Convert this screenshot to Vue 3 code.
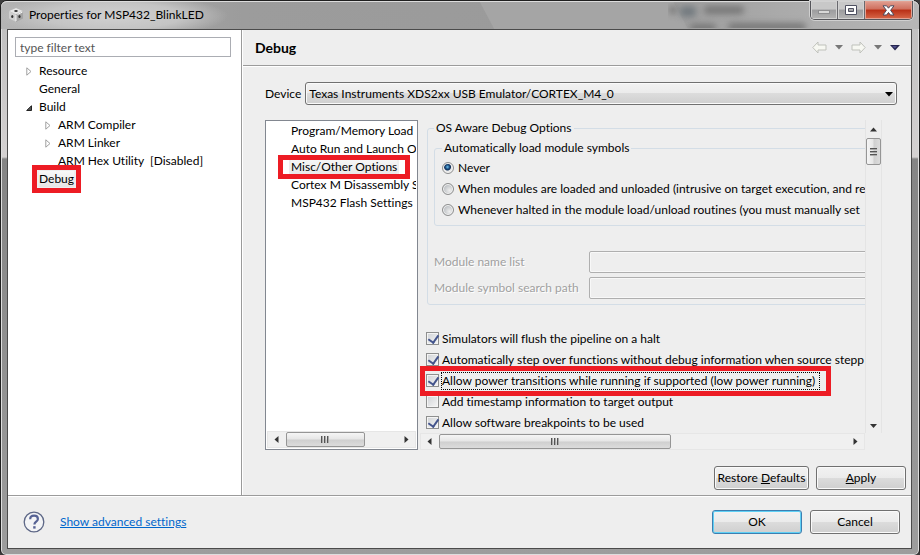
<script setup>
import { ref } from 'vue'

const filter = ref('')
const device = ref('xds2xx')
const loadMode = ref('never')

const tree = [
  { label: 'Resource', level: 0, arrow: 'closed' },
  { label: 'General', level: 0 },
  { label: 'Build', level: 0, arrow: 'open' },
  { label: 'ARM Compiler', level: 1, arrow: 'closed' },
  { label: 'ARM Linker', level: 1, arrow: 'closed' },
  { label: 'ARM Hex Utility  [Disabled]', level: 1 },
  { label: 'Debug', level: 0, marked: true },
]

const categories = [
  { label: 'Program/Memory Load' },
  { label: 'Auto Run and Launch O' },
  { label: 'Misc/Other Options', marked: true },
  { label: 'Cortex M Disassembly S' },
  { label: 'MSP432 Flash Settings' },
]

const modes = [
  { value: 'never', label: 'Never' },
  { value: 'modules', label: 'When modules are loaded and unloaded (intrusive on target execution, and re' },
  { value: 'halted', label: 'Whenever halted in the module load/unload routines (you must manually set' },
]

const options = ref([
  { label: 'Simulators will flush the pipeline on a halt', on: true },
  { label: 'Automatically step over functions without debug information when source stepp', on: true },
  { label: 'Allow power transitions while running if supported (low power running)', on: true, marked: true },
  { label: 'Add timestamp information to target output', on: false },
  { label: 'Allow software breakpoints to be used', on: true },
])
</script>

<template>
  <div class="window">
    <header class="titlebar">
      <svg class="app-icon" viewBox="0 0 16 16" aria-hidden="true">
        <path d="M8 1 15 4v7.500L8 15 1 11.500V4z" fill="#a4a4a4" />
        <path d="M8 1 15 4 8 7.500 1 4z" fill="#e6e6e6" />
        <path d="M1 4 8 7.500V15l-7-3.500z" fill="#d0d0d0" />
        <ellipse cx="8" cy="4" rx="1.800" ry="1" fill="#333" />
        <ellipse cx="4.300" cy="9.500" rx="1.100" ry="1.600" fill="#333" />
        <ellipse cx="11.500" cy="9.500" rx="1.100" ry="1.600" fill="#333" />
        <path d="M8 8v6M9.500 7.500l5-2.500" stroke="#f4f4f4" />
      </svg>
      <h1 class="title">Properties for MSP432_BlinkLED</h1>
      <div class="ghost" aria-hidden="true"><i></i><i></i><i></i><i></i><i></i></div>
      <div class="controls">
        <button class="ctl" aria-label="Minimize">
          <svg width="12" height="12" viewBox="0 0 12 12"><rect x=".5" y="6.500" width="11" height="3" fill="#d8d8d8" stroke="#8e8e90" /></svg>
        </button>
        <button class="ctl" aria-label="Maximize">
          <svg width="12" height="11" viewBox="0 0 12 11"><path d="M.5.5h11v9H.5zM3.500 3.500v3h5v-3z" fill="#fff" fill-rule="evenodd" stroke="#4e5060" /></svg>
        </button>
        <button class="ctl close" aria-label="Close">
          <svg width="13" height="11" viewBox="0 0 13 11"><path d="M1 .8h3.600l1.900 2.400L8.400.8H12L8.600 5.300 12 10H8.400L6.500 7.500 4.600 10H1l3.400-4.700z" fill="#fff" stroke="#4c4a5c" /></svg>
        </button>
      </div>
    </header>

    <div class="client">
      <main class="panes">
        <nav class="sidebar" aria-label="Property pages">
          <input v-model="filter" class="filter" type="text" placeholder="type filter text" aria-label="Filter" />
          <ul class="tree">
            <li v-for="n in tree" :key="n.label" :class="['node', 'level-' + n.level]">
              <span class="arrow">
                <svg v-if="n.arrow === 'closed'" width="6" height="9" viewBox="0 0 6 9"><path d="M.8.8v7.400l4.200-3.700z" fill="#fff" stroke="#a0a0a0" /></svg>
                <svg v-else-if="n.arrow === 'open'" width="6" height="6" viewBox="0 0 6 6"><path d="M5.500.7v4.800H.7z" fill="#555" stroke="#222" /></svg>
              </span>
              <span :class="['text', { marked: n.marked, 'tree-mark': n.marked }]">{{ n.label }}</span>
            </li>
          </ul>
        </nav>

        <section class="page">
          <div class="page-head">
            <h2>Debug</h2>
            <div class="history">
              <button aria-label="Back">
                <svg width="15" height="13" viewBox="0 0 15 13"><path d="M.8 6.500 6 1v3h8v5H6v3z" fill="#f7f8f2" stroke="#bfc1bb" /></svg>
              </button>
              <button aria-label="Back menu"><svg width="8" height="5" viewBox="0 0 8 5"><path d="M0 0h8L4 4.500z" fill="#777" /></svg></button>
              <button aria-label="Forward">
                <svg width="15" height="13" viewBox="0 0 15 13"><path d="M14.200 6.500 9 1v3H1v5h8v3z" fill="#f7f8f2" stroke="#bfc1bb" /></svg>
              </button>
              <button aria-label="Forward menu"><svg width="8" height="5" viewBox="0 0 8 5"><path d="M0 0h8L4 4.500z" fill="#777" /></svg></button>
              <button aria-label="View menu"><svg width="10" height="6" viewBox="0 0 10 6"><path d="M0 0h10L5 5.500z" fill="#25254f" /><path d="M2 1h5L5 3.500z" fill="#50508c" /></svg></button>
            </div>
          </div>

          <div class="page-body">
            <div class="device">
              <label for="device">Device</label>
              <div class="combo">
                <select id="device" v-model="device">
                  <option value="xds2xx">Texas Instruments XDS2xx USB Emulator/CORTEX_M4_0</option>
                </select>
                <svg class="combo-arrow" width="8" height="5" viewBox="0 0 8 5" aria-hidden="true"><path d="M0 0h8L4 4.500z" fill="#000" /></svg>
              </div>
            </div>

            <div class="split">
              <div class="list">
                <ul>
                  <li v-for="c in categories" :key="c.label"><span :class="['text', { marked: c.marked, 'list-mark': c.marked }]">{{ c.label }}</span></li>
                </ul>
                <div class="hbar" aria-hidden="true">
                  <svg width="5" height="8" viewBox="0 0 5 8"><path d="M4.500 0v7L.5 3.500z" fill="#333" /></svg>
                  <div class="track"><div class="thumb small"><i></i><i></i><i></i></div></div>
                  <svg width="5" height="8" viewBox="0 0 5 8"><path d="M.5 0v7l4-3.500z" fill="#333" /></svg>
                </div>
              </div>

              <div class="scroller">
                <div class="viewport">
                  <div class="content">
                    <fieldset class="outer">
                      <legend>OS Aware Debug Options</legend>
                      <fieldset class="inner">
                        <legend>Automatically load module symbols</legend>
                        <label v-for="m in modes" :key="m.value" class="choice">
                          <input v-model="loadMode" type="radio" name="mode" :value="m.value" />
                          <span>{{ m.label }}</span>
                        </label>
                      </fieldset>
                      <div class="modules">
                        <label for="mod-list">Module name list</label>
                        <input id="mod-list" type="text" disabled />
                        <label for="mod-path">Module symbol search path</label>
                        <input id="mod-path" type="text" disabled />
                      </div>
                    </fieldset>
                    <div class="checks">
                      <div v-for="o in options" :key="o.label" class="check-row">
                        <label :class="['check', { marked: o.marked, 'check-mark': o.marked }]">
                          <input v-model="o.on" type="checkbox" />
                          <span :class="{ focus: o.marked }">{{ o.label }}</span>
                        </label>
                      </div>
                    </div>
                  </div>
                </div>
                <div class="vbar" aria-hidden="true">
                  <svg width="8" height="5" viewBox="0 0 8 5"><path d="M0 4.500h7L3.500.5z" fill="#333" /></svg>
                  <div class="thumb-v"><i></i><i></i><i></i></div>
                  <svg class="down" width="8" height="5" viewBox="0 0 8 5"><path d="M0 0h7L3.500 4z" fill="#333" /></svg>
                </div>
                <div class="hbar" aria-hidden="true">
                  <svg width="5" height="8" viewBox="0 0 5 8"><path d="M4.500 0v7L.5 3.500z" fill="#333" /></svg>
                  <div class="track"><div class="thumb"><i></i><i></i><i></i></div></div>
                  <svg width="5" height="8" viewBox="0 0 5 8"><path d="M.5 0v7l4-3.500z" fill="#333" /></svg>
                </div>
              </div>
            </div>
          </div>

          <div class="page-actions">
            <button class="btn restore">Restore <u>D</u>efaults</button>
            <button class="btn"><u>A</u>pply</button>
          </div>
        </section>
      </main>

      <footer class="footer">
        <button class="help" aria-label="Help">
          <svg width="22" height="22" viewBox="0 0 22 22">
            <circle cx="11" cy="11" r="9.800" fill="#f3f4f6" stroke="#5d6786" stroke-width="1.300" />
            <path d="M7.200 8.200c0-2.300 1.700-3.500 3.900-3.500s3.800 1.200 3.800 3.200c0 2.700-3.500 2.800-3.500 5.500" fill="none" stroke="#566294" stroke-width="2.200" />
            <rect x="10.200" y="15.200" width="2.400" height="2.400" fill="#566294" />
          </svg>
        </button>
        <a href="#advanced">Show advanced settings</a>
        <div class="footer-actions">
          <button class="btn primary">OK</button>
          <button class="btn">Cancel</button>
        </div>
      </footer>
    </div>
  </div>
</template>

<style>
body {
  background: #3c3c3c;
}
</style>

<style scoped>
* {
  box-sizing: border-box;
}

.window {
  display: flex;
  flex-direction: column;
  min-height: 100vh;
  padding: 0 7px 6px 6px;
  border: 1px solid #1f1f1f;
  border-radius: 7px 7px 6px 6px;
  box-shadow: inset 0 0 0 1px #dedede;
  background: linear-gradient(180deg, #bdbdbd 0, #d4d1d1 156px, #858585 158px, #9d9d9d 100%);
  font: 12px/16px Lato, "Open Sans", sans-serif;
  font-variant-ligatures: none;
  color: #000;
}

button,
input,
select {
  font: inherit;
  color: inherit;
}

button {
  padding: 0;
}

svg {
  display: block;
  flex: none;
}

ul {
  list-style: none;
  margin: 0;
  padding: 0;
}

/* Title bar */
.titlebar {
  position: relative;
  display: flex;
  align-items: center;
  height: 28px;
  margin: 0 -7px 0 -6px;
  padding: 0 6px 0 7px;
  border-radius: 6px 6px 0 0;
  box-shadow: inset 0 1px 0 #dcdcdc;
  background:
    radial-gradient(ellipse 115px 22px at 112px 15px, #d0d0d0 0, #c4c4c4 60%, transparent 100%),
    linear-gradient(62deg, transparent 435px, #a5a5a5 436px, #a5a5a5 606px, transparent 607px),
    linear-gradient(90deg, #b4b4b4 0, #9c9c9c 240px, #9a9a9a 640px, #aaa 780px, #b6b6b6 100%);
}

.app-icon {
  width: 16px;
  height: 16px;
}

.title {
  flex: 1;
  margin: 0 0 0 5px;
  font-size: 12px;
  font-weight: 400;
}

.ghost {
  position: absolute;
  top: 2px;
  right: 105px;
  width: 146px;
  height: 25px;
  overflow: hidden;
}

.ghost i {
  position: absolute;
  top: 3px;
  left: 1px;
  width: 8px;
  height: 8px;
  border-radius: 4px;
  background: #777;
  filter: blur(3px);
}

.ghost i:nth-child(2) {
  left: 12px;
  width: 16px;
  height: 11px;
  background: #747b80;
}

.ghost i:nth-child(3) {
  left: 36px;
  width: 40px;
}

.ghost i:nth-child(4) {
  top: 21px;
  left: 22px;
  width: 26px;
}

.ghost i:nth-child(5) {
  top: 20px;
  left: 60px;
  width: 78px;
}

.controls {
  display: flex;
  align-self: flex-start;
  border: 1px solid #55555a;
  border-top: 0;
  border-radius: 0 0 5px 5px;
  box-shadow: 0 0 0 1px #d0d0d0;
  overflow: hidden;
}

.ctl {
  display: grid;
  place-items: center;
  width: 27px;
  height: 18px;
  border: 0;
  border-right: 1px solid #69696e;
  box-shadow: inset 0 0 0 1px #d2d2d2;
  background: linear-gradient(#c8c8c8 0 45%, #9c9c9e 50%, #b4b4b4 100%);
}

.ctl.close {
  width: 47px;
  border-right: 0;
  box-shadow: inset 0 0 0 1px #e2a394;
  background: linear-gradient(#e1a093 0, #cf6f5d 45%, #b92f16 50%, #d8694a 100%);
}

/* Client area */
.client {
  flex: 1;
  display: flex;
  flex-direction: column;
  border: 1px solid #4b4b4b;
  background: #eee;
}

.panes {
  flex: 1;
  display: flex;
}

.sidebar {
  flex: 0 0 234px;
  padding: 7px 10px 0 7px;
  border-right: 1px solid #9a9a9a;
  background: #fff;
}

.filter {
  display: block;
  width: 100%;
  height: 20px;
  padding: 0 4px;
  border: 1px solid #abadb3;
  border-radius: 0;
  background: #fff;
}

.filter::placeholder {
  color: #555;
  opacity: 1;
}

.tree {
  padding: 5px 0 0 7px;
}

.node {
  display: flex;
  align-items: center;
  height: 18px;
  white-space: pre;
}

.node.level-1 {
  padding-left: 19px;
}

.arrow {
  flex: 0 0 17px;
  padding: 1px 0 0 4px;
}

/* Red annotation frames */
.marked {
  position: relative;
}

.marked::after {
  content: "";
  position: absolute;
  border: 5px solid #ed1c24;
  pointer-events: none;
}

.tree-mark,
.list-mark {
  background: linear-gradient(#f8f8f8, #e6e6e6);
  box-shadow: 0 0 0 2px #eee;
}

.tree-mark::after {
  inset: -6px -7px;
}

.list-mark::after {
  inset: -3px -13px;
}

/* Property page */
.page {
  flex: 1;
  min-width: 0;
  display: flex;
  flex-direction: column;
  border-left: 1px solid #fff;
}

.page-head {
  display: flex;
  align-items: center;
  justify-content: space-between;
  height: 36px;
  padding: 0 11px 0 12px;
  border-bottom: 1px solid #9b9b9b;
  box-shadow: 0 1px 0 #fff;
}

.page-head h2 {
  margin: 0;
  font-size: 14px;
  font-weight: 700;
}

.history {
  display: flex;
  align-items: center;
  gap: 8px;
}

.history button {
  border: 0;
  background: none;
}

.page-body {
  flex: 1;
  display: flex;
  flex-direction: column;
  gap: 15px;
  padding: 16px 14px 0 22px;
}

.device {
  display: flex;
  align-items: center;
  gap: 4px;
}

.device label {
  flex: 0 0 35px;
}

.combo {
  position: relative;
  flex: 1;
}

.combo select {
  display: block;
  width: 100%;
  height: 23px;
  padding: 0 3px;
  border: 1px solid #707070;
  border-radius: 3px;
  box-shadow: inset 0 0 0 1px #fafafa;
  background: linear-gradient(#f2f2f2 0, #ebebeb 49%, #dcdcdc 50%, #cfcfcf 100%);
  appearance: none;
}

.combo-arrow {
  position: absolute;
  top: 10px;
  right: 4px;
  pointer-events: none;
}

.split {
  flex: 1;
  display: flex;
  gap: 2px;
  padding-right: 15px;
}

.list {
  flex: 0 0 153px;
  min-width: 0;
  display: flex;
  flex-direction: column;
  justify-content: space-between;
  padding: 1px;
  border: 1px solid #828790;
  background: #fff;
}

.list ul {
  overflow: hidden;
}

.list li {
  height: 18px;
  padding-left: 24px;
  line-height: 18px;
  white-space: nowrap;
}

.list .text {
  display: inline-block;
}

.scroller {
  flex: 1;
  min-width: 0;
  display: grid;
  grid-template-columns: 1fr 17px;
  grid-template-rows: 1fr 17px;
}

.viewport {
  min-width: 0;
  overflow: hidden;
}

.content {
  width: 640px;
  padding-left: 7px;
}

fieldset {
  margin: 0;
  border: 1px solid #d3dde6;
  border-radius: 3px;
}

legend {
  padding: 0 2px;
}

.outer {
  padding: 4px 6px 5px;
}

.inner {
  padding: 1px 6px 5px 7px;
}

.choice {
  display: flex;
  align-items: center;
  gap: 3px;
  height: 21px;
  white-space: nowrap;
}

.choice input {
  flex: none;
  width: 12px;
  height: 12px;
  margin: 0 1px 0 0;
  border: 1px solid #8e8f8f;
  border-radius: 50%;
  box-shadow: inset 0 0 0 1px #f4f4f4;
  background: radial-gradient(circle at 65% 65%, #eee 0, #c2c5c8 60%);
  appearance: none;
}

.choice input:checked {
  background: radial-gradient(circle at 45% 40%, #6fc3ee 0, #1b4f83 2px, #0f2f58 3px, #e8e8e8 4px);
}

.modules {
  display: grid;
  grid-template-columns: 155px 1fr;
  align-items: center;
  row-gap: 4px;
  padding-top: 25px;
  color: #a0a0a0;
}

.modules label {
  text-shadow: 1px 1px 0 #fff;
  white-space: nowrap;
}

.modules input {
  height: 22px;
  border: 1px solid #afafaf;
  border-radius: 2px;
  box-shadow: inset 0 0 0 1px #f8f8f8;
  background: #eee;
}

.checks {
  padding: 23px 0 0;
}

.check-row {
  display: flex;
  height: 21px;
  align-items: center;
}

.check {
  display: flex;
  align-items: center;
  gap: 3px;
  white-space: nowrap;
}

.check input {
  flex: none;
  width: 13px;
  height: 13px;
  margin: 0;
  margin-left: -1px;
  border: 1px solid #8e8f8f;
  box-shadow: inset 0 0 0 1px #f4f4f4;
  background: linear-gradient(135deg, #cfd2d6, #f6f6f6);
  appearance: none;
}

.check input:checked::before {
  content: "";
  display: block;
  width: 5px;
  height: 8px;
  margin: 0 0 0 3px;
  border: solid #43548c;
  border-width: 0 2px 2px 0;
  transform: rotate(35deg);
}

.focus {
  padding-right: 4px;
  outline: 1px dotted #000;
}

.check-mark::after {
  inset: -7px -12px -7px -7px;
}

/* Scroll bars */
.hbar {
  display: flex;
  align-items: center;
  gap: 7px;
  height: 17px;
  padding: 0 6px;
  border: 1px solid #e6e6e6;
  background: #f0f0f0;
}

.track {
  flex: 1;
}

.thumb,
.thumb-v {
  display: flex;
  align-items: center;
  justify-content: center;
  gap: 1px;
  width: 57%;
  height: 15px;
  border: 1px solid #959595;
  border-radius: 2px;
  background: linear-gradient(#f5f5f5 0, #e6e6e6 48%, #cfcfcf 52%, #dcdcdc 100%);
}

.thumb.small {
  width: 71%;
}

.thumb i {
  width: 2px;
  height: 7px;
  border-left: 1px solid #555;
  background: #aaa;
}

.vbar {
  display: flex;
  flex-direction: column;
  align-items: center;
  padding: 7px 0 4px;
  border: solid #e4e4e4;
  border-width: 0 1px;
}

.thumb-v {
  flex-direction: column;
  width: 15px;
  height: 27px;
  margin-top: 6px;
  background: linear-gradient(90deg, #f5f5f5 0, #e6e6e6 48%, #cfcfcf 52%, #dcdcdc 100%);
}

.thumb-v i {
  width: 7px;
  height: 2px;
  border-top: 1px solid #555;
  background: #aaa;
}

.down {
  margin-top: auto;
}

/* Buttons */
.page-actions,
.footer-actions {
  display: flex;
  justify-content: flex-end;
}

.page-actions {
  gap: 7px;
  padding: 16px 5px 5px;
}

.btn {
  min-width: 90px;
  height: 24px;
  border: 1px solid #707070;
  border-radius: 3px;
  box-shadow: inset 0 0 0 1px #fafafa;
  background: linear-gradient(#f2f2f2 0, #ebebeb 49%, #dcdcdc 50%, #cfcfcf 100%);
  white-space: nowrap;
}

.btn.restore {
  min-width: 95px;
}

.btn.primary {
  border-color: #3c7fb1;
  box-shadow: inset 0 0 0 1px #5fd0f5;
}

.footer {
  display: flex;
  align-items: center;
  height: 53px;
  padding: 0 11px 0 15px;
  border-top: 1px solid #9b9b9b;
  box-shadow: inset 0 1px 0 #fff;
}

.help {
  border: 0;
  background: none;
}

.footer a {
  margin-left: 15px;
  color: #0066cc;
}

.footer-actions {
  flex: 1;
  gap: 8px;
}
</style>
